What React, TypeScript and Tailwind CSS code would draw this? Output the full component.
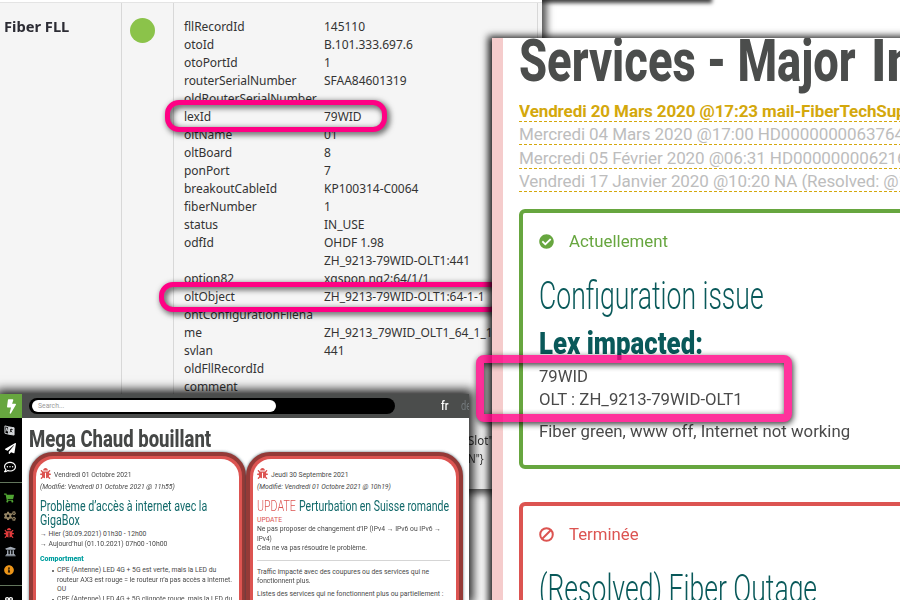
import { useLayoutEffect, useRef, useState, type ReactNode } from "react";
import {
  FaBolt,
  FaBug,
  FaCogs,
  FaInfoCircle,
  FaPaperPlane,
  FaRegCommentDots,
  FaShoppingCart,
  FaUniversity,
  FaCheckCircle,
  FaInfinity,
} from "react-icons/fa";

/* Single line of text squeezed or stretched to an exact width. */
function Fit({ w, className = "", children }: { w: number; className?: string; children: ReactNode }) {
  const ref = useRef<HTMLSpanElement>(null);
  const [scale, setScale] = useState(1);
  useLayoutEffect(() => {
    if (ref.current) setScale(w / ref.current.scrollWidth);
  }, [w]);
  return (
    <span className={`block shrink-0 ${className}`} style={{ width: w }}>
      <span ref={ref} className="inline-block origin-left whitespace-nowrap" style={{ transform: `scaleX(${scale})` }}>
        {children}
      </span>
    </span>
  );
}

const records: [string, string][] = [
  ["fllRecordId", "145110"],
  ["otoId", "B.101.333.697.6"],
  ["otoPortId", "1"],
  ["routerSerialNumber", "SFAA84601319"],
  ["oldRouterSerialNumber", ""],
  ["lexId", "79WID"],
  ["oltName", "01"],
  ["oltBoard", "8"],
  ["ponPort", "7"],
  ["breakoutCableId", "KP100314-C0064"],
  ["fiberNumber", "1"],
  ["status", "IN_USE"],
  ["odfId", "OHDF 1.98"],
  ["", "ZH_9213-79WID-OLT1:441"],
  ["option82", "xgspon ng2:64/1/1"],
  ["oltObject", "ZH_9213-79WID-OLT1:64-1-1"],
  ["ontConfigurationFilena", ""],
  ["me", "ZH_9213_79WID_OLT1_64_1_1"],
  ["svlan", "441"],
  ["oldFllRecordId", ""],
  ["comment", ""],
];

function RecordWindow() {
  return (
    <section className="absolute left-0 top-0 flex h-[489px] w-[542px] flex-col bg-[#f5f5f5] font-['Noto_Sans',sans-serif] text-xs leading-[18px] text-[#333] shadow-[2px_2px_7px_3px_rgba(0,0,0,0.65)]">
      <div className="flex h-[3px] shrink-0 border-b border-[#e4e4e4] bg-white" />
      <div className="flex grow">
        <div className="w-[122px] border-r border-[#d8d8d8] pl-1 pt-[15px]">
          <b className="text-[14px] font-bold text-[#2c2c34]">
            <Fit w={65}>Fiber FLL</Fit>
          </b>
        </div>
        <div className="w-[52px] border-r border-[#d8d8d8] pl-2 pt-[15px]">
          <div className="size-[25px] rounded-full bg-[#8bc34a]" />
        </div>
        <div className="w-[364px] border-r border-[#d8d8d8] pl-[10px] pt-[15px]">
          {records.map(([k, v], i) => (
            <div key={i} className="flex h-[18px] whitespace-nowrap">
              <span className="w-[140px] shrink-0 tracking-[-0.06px]">{k}</span>
              <span className="tracking-[-0.03px]">{v}</span>
            </div>
          ))}
          <div className="flex flex-col pl-[284px] pt-9">
            <Fit w={25}>Slot"</Fit>
            <Fit w={16}>N"{"}"}</Fit>
          </div>
        </div>
      </div>
    </section>
  );
}

function ServicesWindow() {
  const past = [
    ["Mercredi 04 Mars 2020 @17:00 HD0000000063764", "h-[23px] pt-[2px]"],
    ["Mercredi 05 Février 2020 @06:31 HD0000000062167", "h-[24px] pt-[3px]"],
    ["Vendredi 17 Janvier 2020 @10:20 NA (Resolved: @10:45)", "h-[23px] pt-[2px]"],
  ];
  return (
    <section className="absolute left-[492px] top-[38px] h-[600px] w-[420px] border-l-[11px] border-[#f5cccc] bg-white pl-4 font-[Roboto,sans-serif] text-[17px] text-[#4a4a4a] shadow-[-1px_1px_7px_3px_rgba(0,0,0,0.85)]">
      <div className="flex h-[61px] gap-[15px] overflow-hidden text-[59px] font-extrabold leading-[45px] text-[#4b4d4c]">
        <Fit w={337}>Services - Major</Fit>
        <Fit w={45}>In</Fit>
      </div>
      <div className="h-[23px] overflow-hidden whitespace-nowrap border-b border-dashed border-[#d4a80c] pt-[2px] font-bold leading-5 tracking-[-0.1px] text-[#d4a80c]">
        Vendredi 20 Mars 2020 @17:23 mail-FiberTechSupport
      </div>
      {past.map(([t, h]) => (
        <div key={t} className={`${h} overflow-hidden whitespace-nowrap border-b border-dashed border-[#d4a80c] leading-5 tracking-[-0.09px] text-[#bdbdbd]`}>
          {t}
        </div>
      ))}
      <article className="mt-[17px] h-[260px] rounded-[6px] border-4 border-[#67a63f] pl-4 pt-[18px]">
        <div className="flex h-5 items-center gap-[15px] text-[#67a63f]">
          <FaCheckCircle className="size-[15px]" />
          <Fit w={99} className="pt-0.5">Actuellement</Fit>
        </div>
        <h2 className="mt-[23px] text-[38px] font-[350] leading-[45px] text-[#09595a]">
          <Fit w={225}>Configuration issue</Fit>
        </h2>
        <h3 className="mt-[6px] text-[31px] font-black leading-[38px] text-[#09595a]">
          <Fit w={164}>Lex impacted:</Fit>
        </h3>
        <p className="mt-[2px] leading-[23px]">
          <Fit w={49}>79WID</Fit>
          <Fit w={204}>OLT : ZH_9213-79WID-OLT1</Fit>
        </p>
        <p className="mt-[9px] leading-[23px]">
          <Fit w={311}>Fiber green, www off, Internet not working</Fit>
        </p>
      </article>
      <article className="mt-[33px] h-[260px] rounded-[6px] border-4 border-[#dc5451] pl-4 pt-[18px]">
        <div className="flex h-5 items-center gap-[15px] text-[#dc5451]">
          <svg viewBox="0 0 15 15" className="size-[15px]" fill="none" stroke="currentColor" strokeWidth="2">
            <circle cx="7.5" cy="7.5" r="6.3" />
            <path d="M3 12 12 3" />
          </svg>
          <Fit w={70} className="pt-0.5">Terminée</Fit>
        </div>
        <h2 className="mt-[23px] text-[38px] font-[350] leading-[45px] text-[#09595a]">
          <Fit w={278}>(Resolved) Fiber Outage</Fit>
        </h2>
      </article>
    </section>
  );
}

function Card({ children }: { children: ReactNode }) {
  return (
    <div className="h-[180px] w-[217px] rounded-[24px] border-4 border-[#943a37] bg-[#dc5451] p-[3px] shadow-[0_0_3px_rgba(40,70,80,0.8)]">
      <div className="h-full rounded-[18px] bg-white pl-1 pt-[10px]">{children}</div>
    </div>
  );
}

const row = "flex items-center";

function NewsWindow() {
  return (
    <section className="absolute left-0 top-[394px] flex h-[206px] w-[469px] bg-white font-[Roboto,sans-serif] text-[6.8px] text-[#484848] shadow-[0_0_10px_4px_rgba(0,0,0,0.9)]">
      <nav className="flex w-[22px] shrink-0 flex-col items-center bg-black text-white">
        <div className="flex h-6 w-full shrink-0 items-center justify-center bg-[#67a63f]">
          <FaBolt className="h-[15px] w-[9px]" />
        </div>
        <svg viewBox="0 0 12 12" className="-ml-1 mt-[7px] h-[11px] w-[11px] shrink-0" fill="none" stroke="#d7dadd" strokeWidth="1">
          <path d="M5 2 1 1v8l4 1M2 7l1-4 1 4" />
          <path d="m5 2 6 1v8l-6-1z" fill="#d7dadd" />
          <path d="M6.5 5h3M8 4v1l-1.5 3M7 6l2 2" stroke="#111" />
        </svg>
        <FaPaperPlane className="-ml-0.5 mt-[7px] size-[11px] shrink-0" />
        <FaRegCommentDots className="-ml-0.5 mt-[7px] size-[12px] shrink-0" />
        <div className="mt-[9px] h-px w-full shrink-0 bg-[#62755c]" />
        <FaShoppingCart className="-ml-1 mt-[10px] h-[10px] w-[10px] shrink-0 text-[#50a433]" />
        <FaCogs className="-ml-0.5 mt-[7px] size-[12px] shrink-0 text-[#968565]" />
        <FaBug className="-ml-1 mt-[6px] size-[10px] shrink-0 text-[#e23b3c]" />
        <FaUniversity className="-ml-0.5 mt-[8px] size-[11px] shrink-0 text-[#a5adb8]" />
        <FaInfoCircle className="-ml-1 mt-[8px] size-[10px] shrink-0 text-[#ed9519]" />
        <div className="mt-[10px] h-px w-full shrink-0 bg-[#62755c]" />
        <FaInfinity className="-ml-1 mt-[9px] size-[8px] shrink-0" />
      </nav>
      <div className="flex w-[447px] flex-col overflow-hidden">
        <header className="flex h-6 shrink-0 items-center bg-[#4b4d4c] pl-[7px]">
          <div className="flex h-4 w-[366px] shrink-0 items-center rounded-full bg-black pl-[3px]">
            <div className="mb-px flex h-3 w-[244px] items-center rounded-full bg-white pl-[6px] pt-px text-[#999]">
              <Fit w={26}>Search...</Fit>
            </div>
          </div>
          <Fit w={7} className="ml-[46px] text-[12px] font-medium text-white">fr</Fit>
          <Fit w={10} className="ml-[13px] text-[12px] text-[#73797c]">de</Fit>
        </header>
        <h1 className="flex h-[34px] shrink-0 items-center pl-[7px] pt-[9px] text-[23px] font-extrabold leading-6 text-[#454746]">
          <Fit w={182}>Mega Chaud bouillant</Fit>
        </h1>
        <div className="flex pl-[7px]">
          <Card>
            <div className={`${row} h-3 gap-[3px]`}>
              <FaBug className="mb-1 size-[11px] text-[#dc5451]" />
              <Fit w={78}>Vendredi 01 Octobre 2021</Fit>
            </div>
            <div className={`${row} h-3 italic`}><Fit w={135}>(Modifié: Vendredi 01 Octobre 2021 @ 11h55)</Fit></div>
            <h2 className="mt-[6px] text-[15px] leading-[14px] text-[#12696a]">
              <Fit w={167}>Problème d’accès à internet avec la</Fit>
              <Fit w={40}>GigaBox</Fit>
            </h2>
            <div className="mt-[2px] leading-[10px]">
              <Fit w={106}>→ Hier (30.09.2021) 01h30 - 12h00</Fit>
              <Fit w={127}>→ Aujourd’hui (01.10.2021) 07h00 -10h00</Fit>
            </div>
            <h3 className="mt-[5px] text-[7.6px] font-black leading-[10px] text-[#009e9f]"><Fit w={44}>Comportment</Fit></h3>
            <div className="mt-[2px] flex gap-[3px] pl-3 leading-[9.5px]">
              <div className="flex w-[2px] flex-col gap-[26.5px] pt-[4px]">
                <i className="size-[2px] rounded-full bg-[#484848]" />
                <i className="size-[2px] rounded-full bg-[#484848]" />
              </div>
              <div>
                <Fit w={159}>CPE (Antenne) LED 4G + 5G est verte, mais la LED du</Fit>
                <Fit w={175}>routeur AX3 est rouge = le routeur n’a pas accès a internet.</Fit>
                <Fit w={9}>OU</Fit>
                <Fit w={175}>CPE (Antenne) LED 4G + 5G clignote rouge, mais la LED du</Fit>
              </div>
            </div>
          </Card>
          <Card>
            <div className={`${row} h-3 gap-[3px]`}>
              <FaBug className="mb-1 size-[11px] text-[#dc5451]" />
              <Fit w={77}>Jeudi 30 Septembre 2021</Fit>
            </div>
            <div className={`${row} h-3 italic`}><Fit w={134}>(Modifié: Vendredi 01 Octobre 2021 @ 10h19)</Fit></div>
            <h2 className="mt-[6px] flex gap-[3px] text-[15px] leading-[14px] text-[#12696a]">
              <Fit w={39} className="font-[350] text-[#dc5451]">UPDATE</Fit>
              <Fit w={150}>Perturbation en Suisse romande</Fit>
            </h2>
            <div className="mt-[2px] leading-[10px] text-[#dc5451]"><Fit w={25}>UPDATE</Fit></div>
            <div className="leading-[9.5px]">
              <Fit w={184}>Ne pas proposer de changement d’IP (IPv4 → IPv6 ou IPv6 →</Fit>
              <Fit w={15}>IPv4)</Fit>
              <Fit w={110}>Cela ne va pas résoudre le problème.</Fit>
            </div>
            <div className="mt-[6px] h-px w-[193px] bg-[#d5d5d5]" />
            <div className="mt-[7px] leading-[9.5px]">
              <Fit w={172}>Traffic impacté avec des coupures ou des services qui ne</Fit>
              <Fit w={54}>fonctionnent plus.</Fit>
              <Fit w={186} className="mt-[3px]">Listes des services qui ne fonctionnent plus ou partiellement :</Fit>
            </div>
          </Card>
        </div>
      </div>
    </section>
  );
}

export default function App() {
  return (
    <main className="relative h-[600px] w-[900px] overflow-hidden bg-white">
      <div className="absolute -top-5 left-[400px] h-5 w-[309px] shadow-[1px_1px_4px_2px_rgba(0,0,0,0.75)]" />
      <RecordWindow />
      <div className="absolute left-[165px] top-[100px] h-8 w-[222px] rounded-[14px] border-5 border-[#ff0084] drop-shadow-[2px_2px_3px_rgba(0,0,0,0.8)]" />
      <div className="absolute left-[159px] top-[282px] h-[30px] w-[345px] rounded-[14px] border-5 border-[#ff0084] drop-shadow-[2px_2px_3px_rgba(0,0,0,0.8)]" />
      <ServicesWindow />
      <NewsWindow />
      <div className="absolute left-[476px] top-[355px] h-[67px] w-[316px] rounded-[8px] border-8 border-[#ff0084] opacity-80 drop-shadow-[1px_2px_3px_rgba(0,0,0,1)]" />
    </main>
  );
}
